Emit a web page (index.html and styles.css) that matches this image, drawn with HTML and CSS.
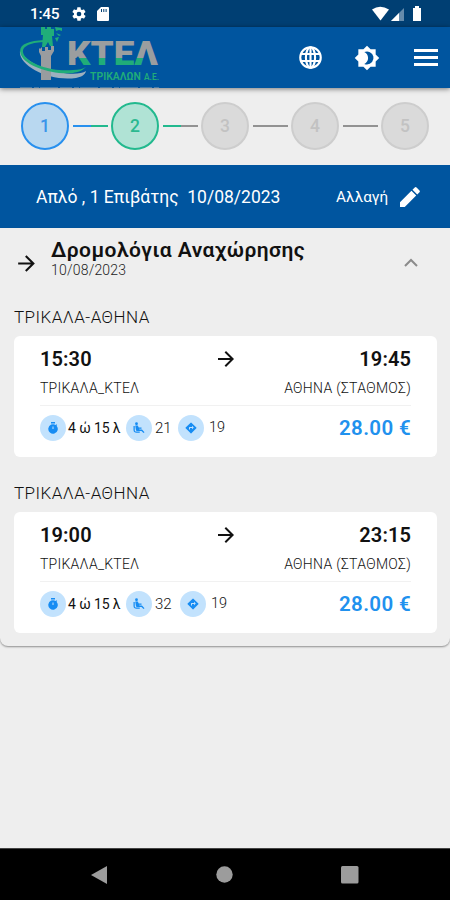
FILE: index.html
```
<!DOCTYPE html>
<html lang="el">
<head>
<meta charset="utf-8">
<title>ΚΤΕΛ Τρικάλων</title>
<link rel="stylesheet" href="styles.css">
</head>
<body>
<svg class="defs" width="0" height="0">
  <symbol id="arrow" viewBox="0 0 24 24"><path d="M12 4l-1.410 1.410L16.170 11H4v2h12.170l-5.580 5.590L12 20l8-8z"/></symbol>
  <symbol id="timer" viewBox="0 0 24 24"><path d="M8 0h8v3H8zM19 7.400l1.400-1.400-1.400-1.400-1.500 1.500A9.500 9.500 0 1 0 19 7.400zM11 9h2v5h-2z" fill-rule="evenodd"/></symbol>
  <symbol id="seat" viewBox="0 0 24 24"><circle cx="7" cy="3.500" r="2.800"/><path d="M4.500 7h5l2 4H17v2.500h-5l1 1.500h5l5 5.500-2 1.500-4-4H9c-2 0-3-1-3.300-3zM1 8h2.500v8c0 2 1 3 3 3h7v2.500H7c-3.500 0-6-2-6-5.500z"/></symbol>
  <symbol id="route" viewBox="0 0 24 24"><path d="M22.700 11.200l-9.900-9.900a1 1 0 0 0-1.500 0l-10 9.900a1 1 0 0 0 0 1.500l10 10a1 1 0 0 0 1.500 0l9.900-10a1 1 0 0 0 0-1.500zM14 14.500V12h-4v3H8v-4a1 1 0 0 1 1-1h5V7.500l3.500 3.500z"/></symbol>
</svg>
<div class="status">
  <span class="clock">1:45</span>
  <svg class="st-gear" viewBox="0 0 24 24"><path d="M19.400 13a7.500 7.500 0 0 0 0-2l2.100-1.600a.5.5 0 0 0 .1-.7l-2-3.400a.5.5 0 0 0-.6-.2l-2.500 1a7 7 0 0 0-1.700-1l-.4-2.700a.5.5 0 0 0-.5-.4h-4a.5.5 0 0 0-.5.400L9.100 5.100a7 7 0 0 0-1.700 1l-2.500-1a.5.5 0 0 0-.6.200l-2 3.400a.5.5 0 0 0 .1.700L4.500 11a7.500 7.500 0 0 0 0 2l-2.100 1.600a.5.5 0 0 0-.1.700l2 3.400c.1.200.4.300.6.200l2.500-1a7 7 0 0 0 1.700 1l.4 2.700c0 .2.200.4.500.4h4c.3 0 .5-.2.500-.4l.4-2.700a7 7 0 0 0 1.700-1l2.500 1c.2.100.5 0 .6-.2l2-3.400a.5.5 0 0 0-.1-.7zM12 15.500a3.500 3.500 0 1 1 0-7 3.500 3.500 0 0 1 0 7z"/></svg>
  <svg class="st-card" viewBox="0 0 12 14"><path d="M4 0h7q1 0 1 1v12q0 1-1 1H1q-1 0-1-1V4zM4 2v3h1V2zM6.300 2v3h1V2zM8.600 2v3h1V2z" fill-rule="evenodd"/></svg>
  <svg class="st-right" viewBox="0 0 52 16"><path d="M1 3.500Q9-2 18 3.500L9.500 14.500z"/><path d="M33 2v13H20z" opacity=".4"/><path d="M28 7v8h-8z"/><path d="M42 2h2V0h4v2h2v13h-8z"/></svg>
</div>
<header class="header">
  <svg class="logo" viewBox="0 0 150 61">
    <defs>
      <pattern id="two" width="150" height="61" patternUnits="userSpaceOnUse"><path d="M0 0h150v61H0z" fill="#9b9e9f"/><path d="M56 31h74l-3 8H62z" fill="#20ad79"/></pattern>
    </defs>
    <path d="M1 24C-1 39 31 55 57 51c5-1 9-3 10-7C57 51 19 44 5 29z" fill="#9eb0bf"/>
    <path d="M21 22l2-2v4h3v-4h3v3h3v-4h3v5l-3 5v24H22V29l-2-4v-4z" fill="#999c9f"/>
    <path d="M22 0h4v2h2V0h4v2h3v7h-2l1 10h-3l-2-4-3 5h-3l1-12h-2zM36 0l7 1v3l-3-1-3 1zM37 6l5 2-2 1zM36 11l4-1-2 5z" fill="#20ad79"/>
    <path d="M24 15C8 16 1 21 5 28c7 10 29 17 49 15 6 0 10-1 13-3-4 4-8 5-13 6C32 48 7 39 2 28-2 18 8 14 25 13z" fill="#20ad79"/>
    <text class="brand" x="48" y="38" textLength="91" lengthAdjust="spacingAndGlyphs" fill="url(#two)">ΚΤΕΛ</text>
    <text class="sub" x="71" y="53" textLength="51" lengthAdjust="spacingAndGlyphs" fill="#20ad79">ΤΡΙΚΑΛΩΝ</text>
    <text class="sub small" x="125" y="53" textLength="15" lengthAdjust="spacingAndGlyphs" fill="#20ad79">Α.Ε.</text>
    <path d="M1 60.500h139" stroke="#7896ae" stroke-dasharray="12 2 5 1 18 2" opacity=".6"/>
  </svg>
  <svg class="h-globe" viewBox="0 0 24 24"><g fill="none" stroke="#fff" stroke-width="2.200"><circle cx="12" cy="12" r="10.700"/><ellipse cx="12" cy="12" rx="4.800" ry="10.700"/><path d="M2 8.300h20M2 15.700h20M12 1v22"/></g></svg>
  <svg class="h-theme" viewBox="0 0 24 24"><path d="M20 8.690V4h-4.690L12 .69 8.690 4H4v4.690L.69 12 4 15.310V20h4.690L12 23.310 15.310 20H20v-4.690L23.310 12zM12 18c-.89 0-1.740-.2-2.500-.55C11.560 16.500 13 14.420 13 12s-1.440-4.500-3.500-5.450A6 6 0 1 1 12 18z"/></svg>
  <span class="menu"><i></i><i></i><i></i></span>
</header>
<nav class="steps">
  <span class="step done">1</span><i class="link l1"></i>
  <span class="step active">2</span><i class="link l2"></i>
  <span class="step">3</span><i class="link"></i>
  <span class="step">4</span><i class="link"></i>
  <span class="step">5</span>
</nav>
<div class="summary">
  <span class="trip">Απλό , 1 Επιβάτης&nbsp; 10/08/2023</span>
  <span class="change">Αλλαγή</span>
  <svg class="pencil" viewBox="0 0 24 24"><path d="M2 17.250V22h4.750L18.200 10.550 13.450 5.800zM21.500 7.250a1.300 1.300 0 0 0 0-1.800L18.550 2.500a1.300 1.300 0 0 0-1.800 0L14.500 4.750l4.750 4.750z"/></svg>
</div>
<main class="panel">
  <div class="panel-head">
    <svg class="arrow lead"><use href="#arrow"/></svg>
    <div class="titles"><h1>Δρομολόγια Αναχώρησης</h1><p>10/08/2023</p></div>
    <svg class="chev" viewBox="0 0 14 9"><path d="M1 8l6-6 6 6" fill="none" stroke="#8b8b8b" stroke-width="2"/></svg>
  </div>
  <h2>ΤΡΙΚΑΛΑ-ΑΘΗΝΑ</h2>
  <article class="card">
    <div class="times"><b>15:30</b><svg class="arrow"><use href="#arrow"/></svg><b>19:45</b></div>
    <div class="stops"><span class="from">ΤΡΙΚΑΛΑ_ΚΤΕΛ</span><span class="to">ΑΘΗΝΑ (ΣΤΑΘΜΟΣ)</span></div>
    <div class="info">
      <span class="dot"><svg><use href="#timer"/></svg></span><span class="dur">4 ώ 15 λ</span>
      <span class="dot"><svg><use href="#seat"/></svg></span><span class="seats">21</span>
      <span class="dot"><svg><use href="#route"/></svg></span><span class="num">19</span>
      <strong>28.00 €</strong>
    </div>
  </article>
  <h2>ΤΡΙΚΑΛΑ-ΑΘΗΝΑ</h2>
  <article class="card">
    <div class="times"><b>19:00</b><svg class="arrow"><use href="#arrow"/></svg><b>23:15</b></div>
    <div class="stops"><span class="from">ΤΡΙΚΑΛΑ_ΚΤΕΛ</span><span class="to">ΑΘΗΝΑ (ΣΤΑΘΜΟΣ)</span></div>
    <div class="info">
      <span class="dot"><svg><use href="#timer"/></svg></span><span class="dur">4 ώ 15 λ</span>
      <span class="dot"><svg><use href="#seat"/></svg></span><span class="seats wide">32</span>
      <span class="dot"><svg><use href="#route"/></svg></span><span class="num">19</span>
      <strong>28.00 €</strong>
    </div>
  </article>
</main>
<footer class="navbar">
  <svg width="16" height="18" viewBox="0 0 16 18"><path d="M0 9L16 0v18z"/></svg>
  <svg width="17" height="17" viewBox="0 0 17 17"><circle cx="8.500" cy="8.500" r="8.200"/></svg>
  <svg width="18" height="18" viewBox="0 0 18 18"><rect width="17.500" height="17.500" rx="1.500"/></svg>
</footer>
</body>
</html>
```
FILE: styles.css
```
* { box-sizing: border-box; margin: 0; padding: 0; }
body {
  width: 450px; height: 900px; overflow: hidden;
  display: flex; flex-direction: column;
  background: #eee; color: #111;
  font-family: Roboto, "Noto Sans", sans-serif;
}
svg { display: block; flex: none; fill: currentColor; }
.defs { position: absolute; }

.status { height: 27px; flex: none; background: #003f73; color: #fff; display: flex; align-items: center; padding: 0 27px 0 30px; }
.clock { width: 41px; font-size: 15.500px; font-weight: 500; letter-spacing: -.3px; }
.st-gear { width: 16px; height: 16px; }
.st-card { width: 12px; height: 14px; margin-left: 10px; }
.st-right { width: 52px; height: 16px; margin-left: auto; }

.header { height: 61px; flex: none; background: #00559f; color: #fff; display: flex; align-items: center; padding: 0 12px 0 19px; box-shadow: 0 1px 5px rgba(0,0,0,.5); z-index: 1; }
.logo { width: 150px; height: 61px; }
.brand { font: 900 34px Roboto, sans-serif; }
.sub { font: 600 11.500px Roboto, sans-serif; }
.small { font-size: 9px; }
.h-globe { width: 23px; height: 23px; margin-left: 130px; }
.h-theme { width: 26px; height: 26px; margin-left: 32px; }
.menu { display: flex; flex-direction: column; gap: 4px; margin-left: auto; }
.menu i { width: 24px; height: 3px; background: #fff; }

.steps { height: 77px; flex: none; display: flex; align-items: center; justify-content: space-between; padding: 0 21px 1px; }
.step { width: 48px; height: 48px; border-radius: 50%; border: 2px solid #cdcdcd; background: #dadada; color: #c2c2c2; display: flex; align-items: center; justify-content: center; font-size: 17.500px; font-weight: 500; }
.done { background: #b9d8f0; border-color: #2890ee; color: #3995ea; }
.active { background: #b0e3d5; border-color: #22b98e; color: #2bb990; }
.link { width: 35px; height: 2px; background: #929292; }
.l1 { background: linear-gradient(90deg, #2890ee 50%, #22b98e 50%); }
.l2 { background: linear-gradient(90deg, #22b98e 50%, #929292 50%); }

.summary { height: 63px; flex: none; background: #00559f; color: #fff; display: flex; align-items: center; padding: 0 28px 0 36px; }
.trip { font-size: 17.500px; width: 300px; white-space: nowrap; }
.change { font-size: 15.300px; width: 62px; }
.pencil { width: 24px; height: 24px; }

.panel { height: 418px; flex: none; padding: 0 13px 0 14px; border-radius: 0 0 8px 8px; box-shadow: 0 1px 2px rgba(0,0,0,.4); }
.panel-head { height: 74px; display: flex; align-items: flex-start; }
.arrow { width: 25px; height: 25px; }
.lead { margin-top: 23px; }
.titles { margin-left: 12px; padding-top: 10px; }
h1 { font-size: 21px; line-height: 25px; font-weight: 600; letter-spacing: .48px; color: #111; white-space: nowrap; }
.titles p { font-size: 14px; line-height: 15px; font-weight: 300; letter-spacing: .2px; color: #222; }
.chev { width: 14px; height: 9px; margin: 30px 19px 0 auto; }
h2 { font-size: 17px; line-height: 30px; height: 34px; font-weight: 300; letter-spacing: .45px; color: #111; }
.card { height: 121px; background: #fff; border-radius: 6px; padding: 10px 26px 0; margin-bottom: 21px; }
.card:last-child { margin-bottom: 0; }
.times { display: flex; justify-content: space-between; align-items: center; height: 25px; }
.times b { font-size: 20px; font-weight: 600; letter-spacing: .1px; }
.times .arrow { width: 24px; height: 24px; }
.stops { display: flex; justify-content: space-between; height: 35px; line-height: 35px; font-size: 14px; font-weight: 300; letter-spacing: .25px; color: #111; border-bottom: 1px solid #f1f1f1; }
.to { letter-spacing: .3px; }
.info { display: flex; align-items: center; height: 43px; font-size: 15px; white-space: nowrap; }
.dot { width: 26px; height: 26px; flex: none; border-radius: 50%; background: #c2e2fd; color: #168cf3; display: flex; align-items: center; justify-content: center; }
.dot svg { width: 12px; height: 12px; }
.dur { width: 56px; margin-left: 2px; margin-right: 2px; font-size: 14px; letter-spacing: -.1px; }
.seats { width: 23px; margin-left: 3px; font-weight: 300; }
.seats.wide { width: 25px; }
.num { margin-left: 5px; font-size: 14.500px; font-weight: 300; }
.info strong { margin-left: auto; font-size: 20.500px; font-weight: 600; color: #2191ee; letter-spacing: .35px; }

.navbar { margin-top: auto; height: 52px; flex: none; background: #000; color: #9c9c9c; border-top: 1px solid #444; display: flex; align-items: center; justify-content: space-between; padding: 0 91px; }
```
